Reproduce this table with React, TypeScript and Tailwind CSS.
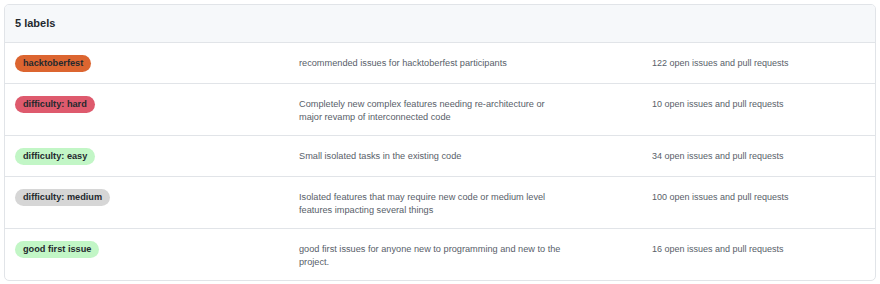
const labels = [
  {
    name: "hacktoberfest",
    color: "bg-[#dc6530]",
    desc: "recommended issues for hacktoberfest participants",
    count: 122,
  },
  {
    name: "difficulty: hard",
    color: "bg-[#de5a6d]",
    desc: "Completely new complex features needing re-architecture or major revamp of interconnected code",
    count: 10,
  },
  {
    name: "difficulty: easy",
    color: "bg-[#c2f6c6]",
    desc: "Small isolated tasks in the existing code",
    count: 34,
  },
  {
    name: "difficulty: medium",
    color: "bg-[#d6d6d6]",
    desc: "Isolated features that may require new code or medium level features impacting several things",
    count: 100,
  },
  {
    name: "good first issue",
    color: "bg-[#c2f6c6]",
    desc: "good first issues for anyone new to programming and new to the project.",
    count: 16,
  },
];

export default function App() {
  return (
    <div className="bg-white w-[880px] h-[284px] p-[4px] font-['Liberation_Sans',Arial,sans-serif]">
      <div className="border border-[#e1e4e8] rounded-[5px] overflow-hidden">
        <div className="bg-[#f6f8fa] border-b border-[#e1e4e8] h-[38px] flex items-center px-[10px]">
          <h3 className="text-[11px] font-bold text-[#24292e]">5 labels</h3>
        </div>
        {labels.map((l, i) => (
          <div
            key={l.name}
            className={`flex items-start px-[10px] pt-[12px] pb-[11px] ${i > 0 ? "border-t border-[#e1e4e8]" : ""}`}
          >
            <div className="w-[284px] shrink-0 flex">
              <span
                className={`${l.color} text-[#24292e] text-[9.2px] font-bold leading-[17px] px-[8px] rounded-full`}
              >
                {l.name}
              </span>
            </div>
            <div className="w-[353px] shrink-0 pr-[88px] text-[9.2px] leading-[13px] text-[#586069] pt-[2px]">
              {l.desc}
            </div>
            <div className="text-[9px] leading-[13px] text-[#586069] pt-[2px]">
              {l.count} open issues and pull requests
            </div>
          </div>
        ))}
      </div>
    </div>
  );
}
